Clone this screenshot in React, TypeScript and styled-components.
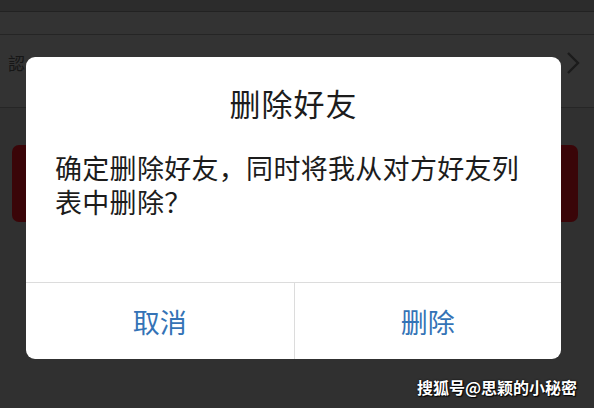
import React from 'react'
import styled, { createGlobalStyle } from 'styled-components'

const GlobalStyle = createGlobalStyle`
  html, body {
    margin: 0;
    padding: 0;
    background: #303030;
  }
`

const Screen = styled.div`
  position: relative;
  width: 594px;
  height: 408px;
  overflow: hidden;
  background: #303030;
  font-family: 'Noto Sans CJK SC', 'Noto Sans', sans-serif;
`

const TopStrip = styled.div`
  height: 11px;
  background: #2c2c2c;
  border-bottom: 1px solid #222;
`

const NavRow = styled.div`
  height: 22px;
  background: #333;
  border-bottom: 1px solid #252525;
`

const ListRow = styled.div`
  height: 72px;
  display: flex;
  align-items: center;
  justify-content: space-between;
  padding: 0 14px 0 8px;
  background: #333;
  border-bottom: 1px solid #262626;
`

const RowIcon = styled.span`
  font-size: 17px;
  line-height: 1;
  color: #161616;
  margin-top: -18px;
`

const Chevron = styled.svg`
  width: 14px;
  height: 24px;
  margin-top: -16px;
`

const DangerCard = styled.div`
  height: 77px;
  margin: 37px 16px 0 12px;
  border-radius: 7px;
  background: #3a0508;
`

const Dialog = styled.div`
  position: absolute;
  left: 26px;
  top: 57px;
  width: 535px;
  height: 302px;
  display: flex;
  flex-direction: column;
  border-radius: 9px;
  background: #fff;
  overflow: hidden;
`

const Title = styled.div`
  padding-top: 26px;
  font-size: 31px;
  line-height: 40px;
  letter-spacing: 1px;
  text-align: center;
  color: #1c1c1c;
`

const Message = styled.div`
  margin-top: 28px;
  padding: 0 24px 0 29px;
  font-size: 27px;
  line-height: 34px;
  letter-spacing: 0.3px;
  color: #1c1c1c;
`

const Spacer = styled.div`
  flex: 1;
`

const Actions = styled.div`
  height: 76px;
  display: grid;
  grid-template-columns: 1fr 1fr;
  border-top: 1px solid #dcdcdc;
`

const ActionButton = styled.button<{ $divider?: boolean }>`
  border: none;
  border-left: ${p => (p.$divider ? '1px solid #dcdcdc' : 'none')};
  background: transparent;
  padding: 0;
  font-family: inherit;
  font-size: 27px;
  color: #3473b6;
  cursor: pointer;
`

const Watermark = styled.div`
  position: absolute;
  right: 17px;
  bottom: 9px;
  font-size: 16px;
  font-weight: 700;
  color: #fff;
  text-shadow: 1px 1px 1px #000, 0 0 2px #000;
`

export default function App() {
  return (
    <Screen>
      <GlobalStyle />
      <TopStrip />
      <NavRow />
      <ListRow>
        <RowIcon>認</RowIcon>
        <Chevron viewBox='0 0 14 24'>
          <polyline points='2,2 12,12 2,22' fill='none' stroke='#1b1b1b' strokeWidth='2.4' />
        </Chevron>
      </ListRow>
      <DangerCard />

      <Dialog>
        <Title>删除好友</Title>
        <Message>确定删除好友，同时将我从对方好友列表中删除？</Message>
        <Spacer />
        <Actions>
          <ActionButton>取消</ActionButton>
          <ActionButton $divider>删除</ActionButton>
        </Actions>
      </Dialog>

      <Watermark>搜狐号@思颖的小秘密</Watermark>
    </Screen>
  )
}
